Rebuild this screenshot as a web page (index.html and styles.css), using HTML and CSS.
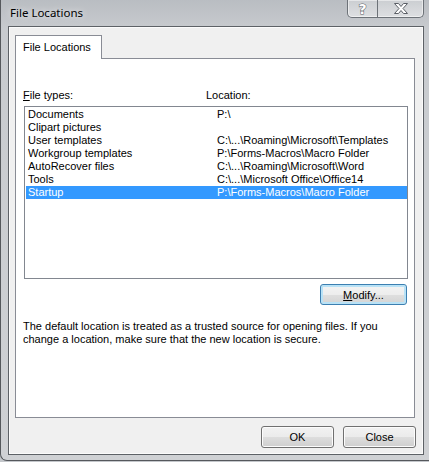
FILE: index.html
```html
<!DOCTYPE html>
<html lang="en">
  <head>
    <meta charset="UTF-8" />
    <title>File Locations</title>
    <link rel="stylesheet" href="styles.css">
  </head>
  <body>
    <div class="window">
      <div class="titlebar">
        <span class="title">File Locations</span>
        <div class="caption-buttons">
          <span class="cap-btn help">?</span>
          <span class="cap-btn close">
            <svg width="16" height="11" viewBox="0 0 16 11">
              <path d="M1.5 0.5h4l2.5 3 2.5-3h4l-4.5 5 4.5 5h-4l-2.5-3-2.5 3h-4l4.5-5z" fill="#fff" stroke="#5b5f66" stroke-width="1" stroke-linejoin="round" />
            </svg>
          </span>
        </div>
      </div>

      <div class="client">
        <div class="tabs">
          <div class="tab">File Locations</div>
        </div>

        <div class="panel">
          <div class="list-head">
            <span class="col-type"><u>F</u>ile types:</span>
            <span>Location:</span>
          </div>
          <div class="listbox">
            <div class="row"><span class="col-name">Documents</span><span>P:\</span></div>
            <div class="row"><span class="col-name">Clipart pictures</span><span></span></div>
            <div class="row"><span class="col-name">User templates</span><span>C:\...\Roaming\Microsoft\Templates</span></div>
            <div class="row"><span class="col-name">Workgroup templates</span><span>P:\Forms-Macros\Macro Folder</span></div>
            <div class="row"><span class="col-name">AutoRecover files</span><span>C:\...\Roaming\Microsoft\Word</span></div>
            <div class="row"><span class="col-name">Tools</span><span>C:\...\Microsoft Office\Office14</span></div>
            <div class="row selected"><span class="col-name">Startup</span><span>P:\Forms-Macros\Macro Folder</span></div>
          </div>
          <div class="modify-row">
            <button class="btn default"><u>M</u>odify...</button>
          </div>
          <p class="note">The default location is treated as a trusted source for opening files. If you change a location, make sure that the new location is secure.</p>
        </div>

        <div class="footer">
          <button class="btn">OK</button>
          <button class="btn">Close</button>
        </div>
      </div>
    </div>
  </body>
</html>
```

FILE: styles.css
```css
body {
  margin: 0;
  width: 429px;
  height: 462px;
  overflow: hidden;
  background: #c4c7cb;
  font-family: "Liberation Sans", Arial, sans-serif;
  font-size: 11px;
  color: #000;
}

.window {
  width: 429px;
  height: 461px;
  border-bottom: 1px solid #55585c;
  border-left: 1px solid #55585c;
  border-radius: 0 0 0 7px;
  box-sizing: border-box;
  background: linear-gradient(to bottom, #b9bdc2 0, #c8cbcf 30px, #cfd1d4 100%);
}

.titlebar {
  display: flex;
  align-items: flex-start;
  height: 26px;
}

.title {
  font-family: "Noto Sans", sans-serif;
  font-size: 11.5px;
  line-height: 25px;
  padding-left: 9px;
  text-shadow: 0 0 6px rgba(255, 255, 255, 0.9);
}

.caption-buttons {
  display: flex;
  margin-left: auto;
  margin-right: 5px;
  height: 17px;
  border: 1px solid #6d7278;
  border-top: none;
  border-radius: 0 0 5px 5px;
  background: linear-gradient(to bottom, rgba(255, 255, 255, 0.25), rgba(255, 255, 255, 0.45));
  box-shadow: inset 0 0 0 1px rgba(255, 255, 255, 0.5);
}

.cap-btn {
  display: flex;
  align-items: center;
  justify-content: center;
  height: 17px;
}

.help {
  width: 29px;
  border-right: 1px solid #6d7278;
  font-family: "DejaVu Sans", sans-serif;
  font-weight: bold;
  font-size: 14px;
  color: #fff;
  -webkit-text-stroke: 1px #5b5f66;
  paint-order: stroke fill;
}

.close {
  width: 45px;
}

.client {
  margin-left: 7px;
  width: 416px;
  height: 429px;
  box-sizing: border-box;
  border: 1px solid #5d6166;
  box-shadow: inset 0 0 0 1px #fbfbfb;
  background: #f0f0f0;
  padding: 8px 6px 0 6px;
}

.tabs {
  display: flex;
}

.tab {
  position: relative;
  z-index: 1;
  margin-bottom: -1px;
  padding: 0 10px 0 7px;
  height: 23px;
  line-height: 22px;
  background: #fff;
  border: 1px solid #898c95;
  border-bottom: none;
}

.panel {
  width: 400px;
  height: 360px;
  box-sizing: border-box;
  background: #fff;
  border: 1px solid #898c95;
  padding-top: 30px;
}

.list-head {
  display: flex;
  padding-left: 7px;
  line-height: 13px;
}

.col-type {
  width: 183px;
}

.listbox {
  margin: 4px 0 0 8px;
  width: 384px;
  height: 173px;
  box-sizing: border-box;
  border: 1px solid #828790;
  padding: 1px 0 0 1px;
}

.row {
  display: flex;
  height: 13px;
  line-height: 13px;
  padding-left: 2px;
  white-space: nowrap;
}

.col-name {
  width: 189px;
}

.row.selected {
  background: #3399ff;
  color: #fff;
}

.modify-row {
  display: flex;
  justify-content: flex-end;
  margin-top: 5px;
  padding-right: 7px;
}

.btn {
  width: 73px;
  height: 22px;
  padding: 0;
  font-family: "Liberation Sans", Arial, sans-serif;
  font-size: 11px;
  color: #000;
  border: 1px solid #707070;
  border-radius: 3px;
  background: linear-gradient(to bottom, #f2f2f2 0, #ebebeb 50%, #dddddd 51%, #cfcfcf 100%);
  box-shadow: inset 0 0 0 1px #fcfcfc;
}

.btn.default {
  width: 87px;
  height: 21px;
  border-color: #3c7fb1;
  box-shadow: inset 0 0 0 2px #b9e2f6;
  background: linear-gradient(to bottom, #f4f4f4 0, #ededed 50%, #dfdfdf 51%, #d4d4d4 100%);
}

.note {
  margin: 15px 0 0 7px;
  max-width: 385px;
  line-height: 13px;
}

.footer {
  display: flex;
  justify-content: flex-end;
  gap: 9px;
  margin-top: 8px;
  padding-right: 1px;
}
```
